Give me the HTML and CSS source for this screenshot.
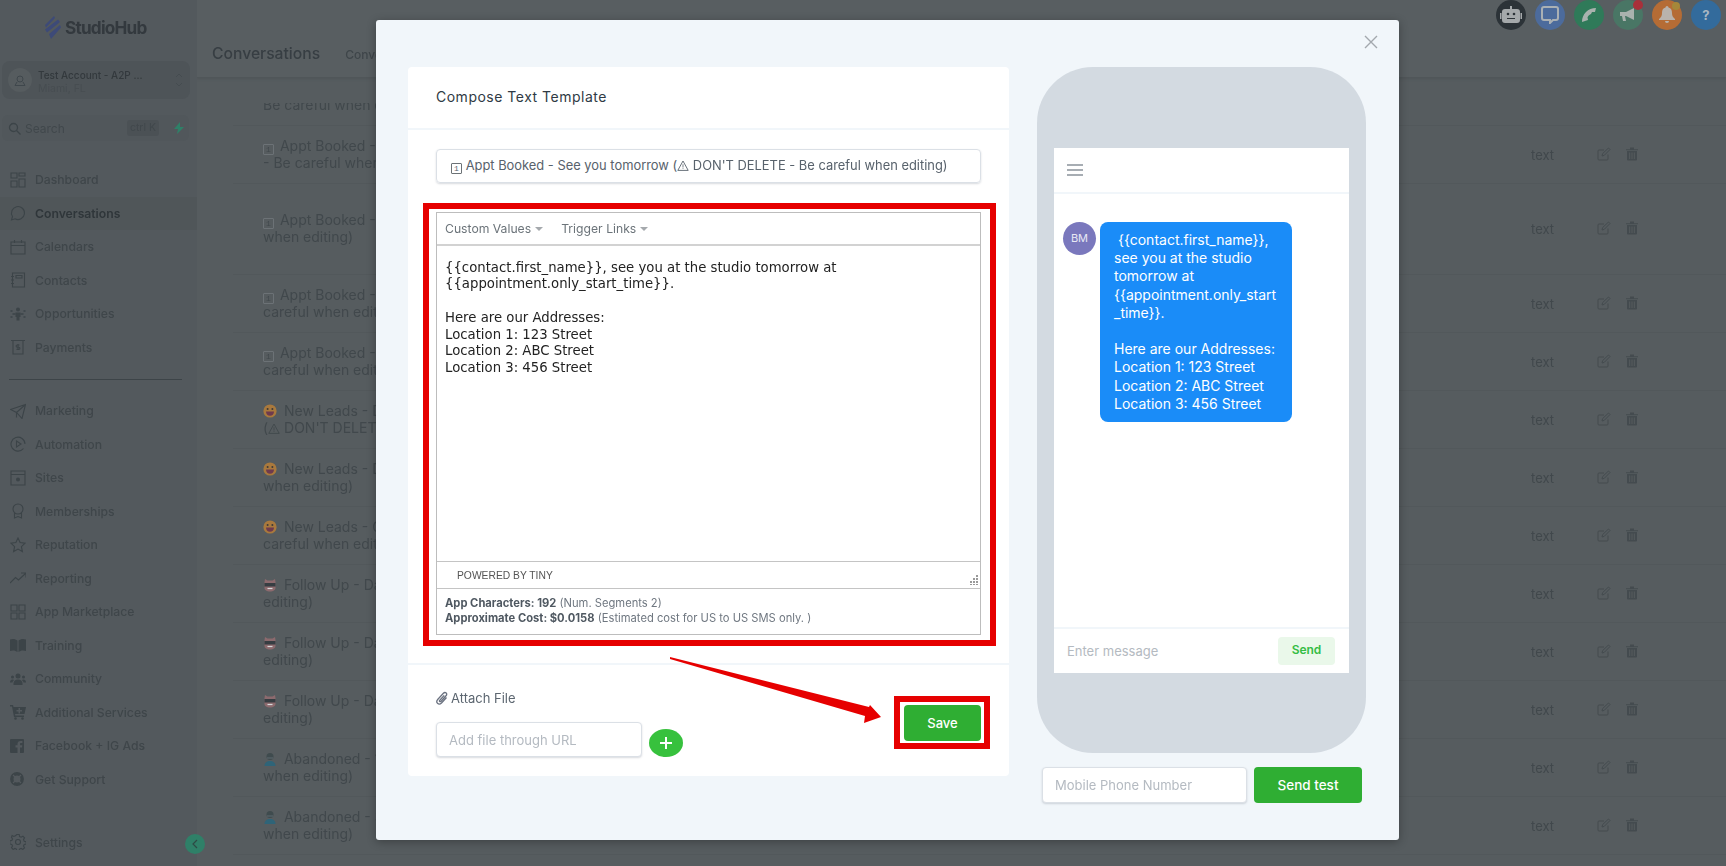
FILE: index.html
```html
<!DOCTYPE html>
<html lang="en">
<head>
    <meta charset="UTF-8">
    <meta name="viewport" content="width=device-width, initial-scale=1.0">
    <title>Compose Text Template</title>
    <link rel="stylesheet" href="styles.css">
</head>
<body>
    <svg class="defs" width="0" height="0" aria-hidden="true">
        <symbol id="grin" viewBox="0 0 14 14">
            <circle cx="7" cy="7" r="6.600" fill="#a9793d"/>
            <circle cx="4.600" cy="5" r="1" fill="#3d3a38"/>
            <circle cx="9.400" cy="5" r="1" fill="#3d3a38"/>
            <path d="M3 7.400h8c0 2.800-1.800 4.400-4 4.400S3 10.200 3 7.400z" fill="#6e3a4e"/>
        </symbol>
        <symbol id="shades" viewBox="0 0 14 14">
            <path d="M1.500 4L2 1l2.500 1.500h5L12 1l.5 3v6c0 2-2.500 3.500-5.500 3.500S1.500 12 1.500 10z" fill="#8c6a6e"/>
            <path d="M1.500 5h11v3.500h-11z" fill="#363d42"/>
            <path d="M4.500 10.500h5" stroke="#d7d9da" stroke-width="1.200"/>
        </symbol>
        <symbol id="person" viewBox="0 0 14 14">
            <circle cx="7" cy="4.500" r="3.500" fill="#3f4b4e"/>
            <path d="M1.500 14c0-3.500 2.500-5 5.500-5s5.500 1.500 5.500 5z" fill="#2f6478"/>
            <path d="M4 5.500h6v1H4z" fill="#5f6b70"/>
        </symbol>
        <symbol id="warn" viewBox="0 0 12 11">
            <path d="M6 1L.8 10.400h10.400z" fill="none" stroke="currentColor" stroke-width=".9"/>
            <path d="M5.600 4.200h.8v3.400h-.8zM5.600 8.200h.8v.9h-.8z" fill="currentColor"/>
        </symbol>
        <symbol id="edit" viewBox="0 0 14 14">
            <path d="M11 7.500V12a1 1 0 0 1-1 1H2a1 1 0 0 1-1-1V4a1 1 0 0 1 1-1h5" fill="none" stroke="currentColor"/>
            <path d="M5 9l.6-2.400L11.500 1l1.500 1.500-5.700 5.800z" fill="none" stroke="currentColor"/>
        </symbol>
        <symbol id="trash" viewBox="0 0 12 14">
            <path d="M0 2.200h12v1H0zM4 .5h4v1.700H4zM1 4h10v8.500a1 1 0 0 1-1 1H2a1 1 0 0 1-1-1zM3.200 5.500v6.500h1V5.500zM5.500 5.500v6.500h1V5.500zM7.800 5.500v6.500h1V5.500z" fill="currentColor" fill-rule="evenodd"/>
        </symbol>
    </svg>

    <div class="page">
        <aside class="sidebar">
            <div class="logo">
                <svg width="16" height="23" viewBox="0 0 16 23"><path d="M0 9L9 0l1 2-9 9.500zM0 13.500L13 3.500l2 2.500L2 16.500zM4 18l11-9 1 2.500L6 23z" fill="#3d4a78"/></svg>
                <span>StudioHub</span>
            </div>
            <div class="account">
                <div class="account-pic">
                    <svg width="12" height="13" viewBox="0 0 12 13" fill="none" stroke="#3f474c"><circle cx="6" cy="5" r="3"/><path d="M3 8L1 11.500h10L9 8"/></svg>
                </div>
                <div class="account-text">
                    <div class="account-name">Test Account - A2P ...</div>
                    <div class="account-city">Miami, FL</div>
                </div>
                <svg width="8" height="16" viewBox="0 0 8 16" fill="none" stroke="#454c50"><path d="M1 5l3-3 3 3M1 11l3 3 3-3"/></svg>
            </div>
            <div class="search">
                <svg width="13" height="13" viewBox="0 0 13 13" fill="none" stroke="#3c4448" stroke-width="1.300"><circle cx="5.500" cy="5.500" r="4"/><path d="M8.500 8.500l4 4"/></svg>
                <span class="search-label">Search</span>
                <span class="search-key">ctrl K</span>
                <svg width="10" height="12" viewBox="0 0 10 12"><path d="M6 0L0 7h4l-1 5 7-7H6z" fill="#2f8068"/></svg>
            </div>
            <nav class="nav">
                <a class="nav-item"><svg viewBox="0 0 16 16"><path d="M1 1h6v5H1zM9 1h6v3H9zM9 7h6v8H9zM1 9h6v6H1z"/></svg>Dashboard</a>
                <a class="nav-item active"><svg viewBox="0 0 16 16"><path d="M1.500 15l1-3.500A6.500 6.500 0 1 1 5 13.800z"/></svg>Conversations</a>
                <a class="nav-item"><svg viewBox="0 0 16 16"><path d="M1 3h14v12H1zM1 6.500h14M4.500 1v3M11.500 1v3"/></svg>Calendars</a>
                <a class="nav-item"><svg viewBox="0 0 16 16"><path d="M2.500 1h12v14h-12zM1 4.500h3M1 8h3M1 11.500h3M6 3.500h6v2.500H6z"/></svg>Contacts</a>
                <a class="nav-item"><svg viewBox="0 0 16 16"><circle cx="8" cy="3.500" r="2" class="fill"/><path class="fill" d="M5.500 6.500h5V11H9.500v3.500h-3V11H5.500z"/><path d="M0.500 5h2M0.500 11h2M13.500 5h2M13.500 11h2M2.500 8h3M10.500 8h3" stroke-width="1.500"/></svg>Opportunities</a>
                <a class="nav-item"><svg viewBox="0 0 16 16"><path d="M1 1.500h14M3 1.500V15h10V1.500M8 5v6M9.500 6H7.200a1 1 0 0 0 0 2.200h1.600a1 1 0 0 1 0 2.200H6.500"/></svg>Payments</a>
                <div class="nav-divider"></div>
                <a class="nav-item"><svg viewBox="0 0 16 16"><path d="M0.500 6.500L15.500 1.500 12 15.500 6.500 9.500zM6.500 9.500L15.500 1.500M6.500 9.500V14.500"/></svg>Marketing</a>
                <a class="nav-item"><svg viewBox="0 0 16 16"><path d="M13.500 12.500A7 7 0 1 1 15 8M6.500 5l4.500 3-4.500 3z"/></svg>Automation</a>
                <a class="nav-item"><svg viewBox="0 0 16 16"><path d="M1 1h14v14H1zM1 4.500h14"/><circle cx="8" cy="9.500" r="2" class="fill"/></svg>Sites</a>
                <a class="nav-item"><svg viewBox="0 0 16 16"><circle cx="8" cy="6" r="5"/><path d="M4.500 10v5L8 13.500l3.500 1.500v-5"/></svg>Memberships</a>
                <a class="nav-item"><svg viewBox="0 0 16 16"><path d="M8 1l2.100 4.600 5 .6-3.700 3.400 1 5L8 12.100l-4.400 2.500 1-5L.9 6.200l5-.6z"/></svg>Reputation</a>
                <a class="nav-item"><svg viewBox="0 0 16 16"><path d="M0 13l5.500-5.500 3 2.500L15.500 3.500M11 3h5v4.500"/></svg>Reporting</a>
                <a class="nav-item"><svg viewBox="0 0 16 16"><path d="M1 1h6v6H1zM9 1h6v6H9zM1 9h6v6H1zM9 9h6v6H9z"/></svg>App Marketplace</a>
                <a class="nav-item"><svg viewBox="0 0 16 16"><path class="fill" d="M0 2.500c3-1 5.500-.5 7.500 1V15c-2-1.500-4.500-2-7.500-1zM16 2.500c-3-1-5.500-.5-7.500 1V15c2-1.500 4.500-2 7.500-1z"/></svg>Training</a>
                <a class="nav-item"><svg viewBox="0 0 16 16"><g class="fill"><circle cx="8" cy="5" r="2.500"/><circle cx="2.500" cy="6" r="1.500"/><circle cx="13.500" cy="6" r="1.500"/><path d="M3.500 14v-1.500C3.500 10 5.500 8.500 8 8.500s4.500 1.500 4.500 4V14zM0 11.500C0 9.500 1 8.500 2.500 8.500c.7 0 1.200.2 1.600.5-1 .8-1.500 1.800-1.600 2.500zM16 11.500c0-2-1-3-2.500-3-.7 0-1.200.2-1.600.5 1 .8 1.500 1.800 1.600 2.500z"/></g></svg>Community</a>
                <a class="nav-item"><svg viewBox="0 0 16 16"><path class="fill" d="M0 1h3l.5 2H16l-1.500 7H5l.3 1.500H14V13H4L2 2.500H0zM8.500 4v2H6.500v1.500h2v2H10v-2h2V6h-2V4z" fill-rule="evenodd"/><circle cx="5.500" cy="14.500" r="1.300" class="fill"/><circle cx="12.500" cy="14.500" r="1.300" class="fill"/></svg>Additional Services</a>
                <a class="nav-item"><svg viewBox="0 0 16 16"><path class="fill" d="M1 1h12a1 1 0 0 1 1 1v12a1 1 0 0 1-1 1h-3V9.500h2l.3-2.300H10V6c0-.7.300-1 1-1h1.400V3H10.500C8.500 3 7.500 4.200 7.500 6v1.200h-2v2.300h2V15H1a1 1 0 0 1-1-1V2a1 1 0 0 1 1-1z"/></svg>Facebook + IG Ads</a>
                <a class="nav-item"><svg viewBox="0 0 16 16"><circle cx="7" cy="8" r="5.200" class="ring"/><path class="cut" d="M3 4l2.500 2.500M11 4L8.500 6.500M3 12l2.500-2.500M11 12L8.500 9.500"/></svg>Get Support</a>
            </nav>
            <a class="nav-item settings"><svg viewBox="0 0 16 16"><circle cx="8" cy="8" r="2.500"/><path d="M6.800.5h2.400l.4 2 1.500.7 1.800-1 1.600 1.700-1 1.700.7 1.600 2 .5v2.400l-2 .4-.7 1.500 1 1.800-1.700 1.600-1.700-1-1.600.7-.5 2H6.800l-.4-2-1.500-.7-1.800 1-1.600-1.700 1-1.700-.7-1.600-2-.5V6.800l2-.4.700-1.500-1-1.800L2.100 1.500l1.700 1 1.600-.7z"/></svg>Settings</a>
            <button class="collapse"><svg width="6" height="10" viewBox="0 0 6 10" fill="none" stroke="#2e4a45" stroke-width="1.200"><path d="M5 1L1 5l4 4"/></svg></button>
        </aside>

        <main class="main">
            <header class="header">
                <div class="top-icons">
                    <span class="top-icon robot"><svg width="22" height="18" viewBox="0 0 22 18"><path d="M10 0h2v3h-2zM5 3h12a3 3 0 0 1 3 3v8a3 3 0 0 1-3 3H5a3 3 0 0 1-3-3V6a3 3 0 0 1 3-3zM0 7h1.500v6H0zM20.500 7H22v6h-1.500z" fill="#a5a9ab"/><circle cx="8" cy="8" r="1.300" fill="#2c3338"/><circle cx="14" cy="8" r="1.300" fill="#2c3338"/><path d="M7 12h8v1H7z" fill="#2c3338"/></svg></span>
                    <span class="top-icon chat"><svg width="18" height="18" viewBox="0 0 18 18" fill="none" stroke="#aab0b4" stroke-width="2"><path d="M3 1h12a2 2 0 0 1 2 2v9a2 2 0 0 1-2 2h-3l-3 3v-3H3a2 2 0 0 1-2-2V3a2 2 0 0 1 2-2z"/></svg></span>
                    <span class="top-icon phone"><svg width="16" height="16" viewBox="0 0 16 16"><path d="M1 15C1 7 7 1 15 1l-1 4-3 0-1 2c-2 1-3 2-3.500 3.500L7 13z" fill="#a9b2ae"/></svg></span>
                    <span class="top-icon mega"><svg width="18" height="16" viewBox="0 0 18 16"><path d="M1 5h6l8-4v12l-8-4H6l1 5H4L3 9H1z" fill="#a9b2ae"/></svg><i class="dot red"></i></span>
                    <span class="top-icon bell"><svg width="16" height="18" viewBox="0 0 16 18"><path d="M8 0a1.500 1.500 0 0 1 1.500 1.500C12 2 13 4 13 7c0 3 1 4.500 3 6v1H0v-1c2-1.500 3-3 3-6 0-3 1-5 3.500-5.500A1.500 1.500 0 0 1 8 0zM6 15h4a2 2 0 0 1-4 0z" fill="#b9b3ac"/></svg><i class="dot yellow"></i></span>
                    <span class="top-icon help">?</span>
                </div>
                <div class="title-row">
                    <h1>Conversations</h1>
                    <span class="tab">Conversations</span>
                </div>
            </header>

            <div class="list">
                <div class="rows">
                    <div class="row"><div class="row-name"><span class="key">1</span> Appt Booked - Reminder (<svg class="warn"><use href="#warn"/></svg> DON'T DELETE<br>Be careful when editing)</div><div class="row-type">text</div><div class="row-actions"><svg class="ic-edit"><use href="#edit"/></svg><svg class="ic-trash"><use href="#trash"/></svg></div></div>
                    <div class="row"><div class="row-name"><span class="key">1</span> Appt Booked - 1 Day Before (<svg class="warn"><use href="#warn"/></svg> DON'T DELETE<br>- Be careful when editing)</div><div class="row-type">text</div><div class="row-actions"><svg class="ic-edit"><use href="#edit"/></svg><svg class="ic-trash"><use href="#trash"/></svg></div></div>
                    <div class="row tall"><div class="row-name"><span class="key">1</span> Appt Booked - Location (<svg class="warn"><use href="#warn"/></svg> DON'T DELETE - Be careful<br>when editing)</div><div class="row-type">text</div><div class="row-actions"><svg class="ic-edit"><use href="#edit"/></svg><svg class="ic-trash"><use href="#trash"/></svg></div></div>
                    <div class="row"><div class="row-name"><span class="key">1</span> Appt Booked - No Show (<svg class="warn"><use href="#warn"/></svg> DON'T DELETE - Be<br>careful when editing)</div><div class="row-type">text</div><div class="row-actions"><svg class="ic-edit"><use href="#edit"/></svg><svg class="ic-trash"><use href="#trash"/></svg></div></div>
                    <div class="row"><div class="row-name"><span class="key">1</span> Appt Booked - See you tomorrow (<svg class="warn"><use href="#warn"/></svg> DON'T DELETE - Be<br>careful when editing)</div><div class="row-type">text</div><div class="row-actions"><svg class="ic-edit"><use href="#edit"/></svg><svg class="ic-trash"><use href="#trash"/></svg></div></div>
                    <div class="row"><div class="row-name"><svg class="emoji"><use href="#grin"/></svg> New Leads - Day 1<br>(<svg class="warn"><use href="#warn"/></svg> DON'T DELETE - Be careful when editing)</div><div class="row-type">text</div><div class="row-actions"><svg class="ic-edit"><use href="#edit"/></svg><svg class="ic-trash"><use href="#trash"/></svg></div></div>
                    <div class="row"><div class="row-name"><svg class="emoji"><use href="#grin"/></svg> New Leads - Day 2 (<svg class="warn"><use href="#warn"/></svg> DON'T DELETE - Be careful<br>when editing)</div><div class="row-type">text</div><div class="row-actions"><svg class="ic-edit"><use href="#edit"/></svg><svg class="ic-trash"><use href="#trash"/></svg></div></div>
                    <div class="row"><div class="row-name"><svg class="emoji"><use href="#grin"/></svg> New Leads - Greeting (<svg class="warn"><use href="#warn"/></svg> DON'T DELETE - Be<br>careful when editing)</div><div class="row-type">text</div><div class="row-actions"><svg class="ic-edit"><use href="#edit"/></svg><svg class="ic-trash"><use href="#trash"/></svg></div></div>
                    <div class="row"><div class="row-name"><svg class="emoji"><use href="#shades"/></svg> Follow Up - Day 1 (<svg class="warn"><use href="#warn"/></svg> DON'T DELETE - Be careful when<br>editing)</div><div class="row-type">text</div><div class="row-actions"><svg class="ic-edit"><use href="#edit"/></svg><svg class="ic-trash"><use href="#trash"/></svg></div></div>
                    <div class="row"><div class="row-name"><svg class="emoji"><use href="#shades"/></svg> Follow Up - Day 2 (<svg class="warn"><use href="#warn"/></svg> DON'T DELETE - Be careful when<br>editing)</div><div class="row-type">text</div><div class="row-actions"><svg class="ic-edit"><use href="#edit"/></svg><svg class="ic-trash"><use href="#trash"/></svg></div></div>
                    <div class="row"><div class="row-name"><svg class="emoji"><use href="#shades"/></svg> Follow Up - Day 3 (<svg class="warn"><use href="#warn"/></svg> DON'T DELETE - Be careful when<br>editing)</div><div class="row-type">text</div><div class="row-actions"><svg class="ic-edit"><use href="#edit"/></svg><svg class="ic-trash"><use href="#trash"/></svg></div></div>
                    <div class="row"><div class="row-name"><svg class="emoji"><use href="#person"/></svg> Abandoned - 1 Day (<svg class="warn"><use href="#warn"/></svg> DON'T DELETE - Be careful<br>when editing)</div><div class="row-type">text</div><div class="row-actions"><svg class="ic-edit"><use href="#edit"/></svg><svg class="ic-trash"><use href="#trash"/></svg></div></div>
                    <div class="row"><div class="row-name"><svg class="emoji"><use href="#person"/></svg> Abandoned - 3 Days (<svg class="warn"><use href="#warn"/></svg> DON'T DELETE - Be careful<br>when editing)</div><div class="row-type">text</div><div class="row-actions"><svg class="ic-edit"><use href="#edit"/></svg><svg class="ic-trash"><use href="#trash"/></svg></div></div>
                </div>
            </div>
        </main>
    </div>

    <div class="modal">
        <button class="modal-close"><svg width="14" height="14" viewBox="0 0 14 14" stroke="#a3a8ad" stroke-width="1.400"><path d="M1 1l12 12M13 1L1 13"/></svg></button>

        <section class="compose">
            <div class="compose-head">Compose Text Template</div>
            <div class="compose-body">
                <div class="template-select"><span class="key">1</span> Appt Booked - See you tomorrow (<svg class="warn"><use href="#warn"/></svg> DON'T DELETE - Be careful when editing)</div>
                <div class="editor">
                    <div class="editor-tools">
                        <span class="tool">Custom Values<i class="caret"></i></span>
                        <span class="tool">Trigger Links<i class="caret"></i></span>
                    </div>
                    <div class="editor-text">
                        <p>{{contact.first_name}}, see you at the studio tomorrow at<br>{{appointment.only_start_time}}.</p>
                        <p><br></p>
                        <p>Here are our Addresses:<br>Location 1: 123 Street<br>Location 2: ABC Street<br>Location 3: 456 Street</p>
                    </div>
                    <div class="editor-status">
                        <span>POWERED BY TINY</span>
                        <svg width="9" height="10" viewBox="0 0 9 10" fill="#9a9a9a"><path d="M7 0h2v2H7zM7 3h2v2H7zM4 3h2v2H4zM7 6h2v2H7zM4 6h2v2H4zM1 6h2v2H1zM7 9h2v1H7zM4 9h2v1H4zM1 9h2v1H1z"/></svg>
                    </div>
                    <div class="editor-info">
                        <div><b>App Characters: 192</b> (Num. Segments 2)</div>
                        <div><b>Approximate Cost: $0.0158</b> (Estimated cost for US to US SMS only. )</div>
                    </div>
                    <div class="highlight"></div>
                </div>
            </div>
            <div class="compose-foot">
                <div class="attach">
                    <div class="attach-label">
                        <svg width="12" height="14" viewBox="0 0 12 14" fill="none" stroke="#6b7280" stroke-width="1.300"><path d="M10.500 6.500l-5 5.500c-1.300 1.300-3 1.300-4 .3s-.8-2.700.4-4l5.500-6c.8-.9 2-1 2.800-.3s.6 1.900-.2 2.800l-5 5.500c-.4.500-1 .5-1.300.2s-.3-.9.100-1.300l4.400-4.800"/></svg>
                        Attach File
                    </div>
                    <div class="attach-row">
                        <input class="field attach-input" placeholder="Add file through URL">
                        <button class="add-btn"><svg width="14" height="14" viewBox="0 0 14 14" stroke="#fff" stroke-width="2"><path d="M7 1v12M1 7h12"/></svg></button>
                    </div>
                </div>
                <div class="save-wrap">
                    <button class="btn-green save">Save</button>
                    <div class="highlight"></div>
                </div>
            </div>
        </section>

        <section class="preview">
            <div class="phone">
                <div class="screen">
                    <div class="screen-head"><span class="burger"></span></div>
                    <div class="screen-body">
                        <div class="avatar">BM</div>
                        <div class="bubble"> {{contact.first_name}}, see you at the studio tomorrow at {{appointment.only_start_time}}.

Here are our Addresses:
Location 1: 123 Street
Location 2: ABC Street
Location 3: 456 Street</div>
                    </div>
                    <div class="screen-foot">
                        <span class="msg-hint">Enter message</span>
                        <span class="msg-send">Send</span>
                    </div>
                </div>
            </div>
            <div class="test-row">
                <input class="field test-input" placeholder="Mobile Phone Number">
                <button class="btn-green send-test">Send test</button>
            </div>
        </section>

        <svg class="arrow" width="212" height="68" viewBox="0 0 212 68">
            <path d="M0 0L199 50 200 48 211 60 194 66 195 59 0 2z" fill="#e60000"/>
        </svg>
    </div>
</body>
</html>
```

FILE: styles.css
```css
* {
    box-sizing: border-box;
}
body {
    margin: 0;
    width: 1726px;
    height: 866px;
    overflow: hidden;
    position: relative;
    background-color: #565c5f;
    font-family: Inter, "Noto Sans", sans-serif;
    font-size: 14px;
}
.defs {
    position: absolute;
}
button {
    border: 0;
    padding: 0;
    font-family: inherit;
    cursor: pointer;
}

/* dimmed page behind the modal */
.page {
    display: flex;
    height: 866px;
    filter: blur(0.5px);
    color: #41484c;
}
.sidebar {
    width: 197px;
    flex-shrink: 0;
    display: flex;
    flex-direction: column;
    position: relative;
    background-color: #53595d;
    padding: 0 2px;
}
.logo {
    height: 61px;
    display: flex;
    align-items: center;
    gap: 4px;
    padding: 0 0 6px 43px;
    font-size: 17.200px;
    font-weight: 700;
    letter-spacing: -0.8px;
    color: #33393e;
}
.account {
    height: 38px;
    width: 188px;
    display: flex;
    align-items: center;
    padding: 0 7px 0 6px;
    background-color: #4e5458;
    border-radius: 8px;
}
.account-pic {
    width: 24px;
    height: 24px;
    border-radius: 50%;
    background-color: #565c5f;
    display: flex;
    align-items: center;
    justify-content: center;
}
.account-text {
    flex: 1;
    padding: 3px 0 0 6px;
}
.account-name {
    font-size: 10px;
    font-weight: 500;
    line-height: 14px;
    color: #33393d;
}
.account-city {
    font-size: 10.500px;
    line-height: 14px;
    color: #474d51;
}
.search {
    height: 26px;
    width: 187px;
    margin-top: 16px;
    display: flex;
    align-items: center;
    padding: 0 5px 0 6px;
    background-color: #51575b;
    border-radius: 6px;
}
.search-label {
    flex: 1;
    padding-left: 4px;
    font-size: 12px;
    color: #41484c;
}
.search-key {
    width: 32px;
    height: 16px;
    margin-right: 15px;
    background-color: #4b5155;
    border-radius: 3px;
    font-size: 10.500px;
    line-height: 16px;
    text-align: center;
}
.nav {
    margin: 22px -2px 0;
    display: flex;
    flex-direction: column;
}
.nav-item {
    height: 33.500px;
    display: flex;
    align-items: center;
    padding-left: 10px;
    gap: 9px;
    font-size: 12.200px;
    font-weight: 500;
    color: #3f464a;
}
.nav-item.active {
    background-color: #505659;
    color: #2f363a;
    font-weight: 600;
}
.nav-item svg {
    width: 16px;
    height: 16px;
    fill: none;
    stroke: #3c4448;
    stroke-width: 1.100;
    flex-shrink: 0;
}
.nav-item svg .fill {
    fill: #3c4448;
    stroke: none;
}
.nav-item svg .ring {
    fill: none;
    stroke-width: 3.400;
}
.nav-item svg .cut {
    stroke: #53595d;
    stroke-width: 1.200;
}
.nav-divider {
    width: 173px;
    margin: 15px 0 14px 9px;
    border-top: 1px solid #3d4448;
}
.settings {
    margin: auto -2px 7px;
}
.collapse {
    position: absolute;
    right: -8px;
    bottom: 12px;
    width: 20px;
    height: 20px;
    border-radius: 50%;
    background-color: #2f8068;
    display: flex;
    align-items: center;
    justify-content: center;
}
.main {
    flex: 1;
    display: flex;
    flex-direction: column;
    min-width: 0;
}
.header {
    height: 78px;
    flex-shrink: 0;
    border-bottom: 1px solid #505659;
    background-color: #585e61;
    box-shadow: 0 1px 2px #4f5558;
}
.top-icons {
    display: flex;
    justify-content: flex-end;
    gap: 9px;
    padding-right: 5px;
}
.top-icon {
    width: 30px;
    height: 30px;
    border-radius: 50%;
    position: relative;
    display: flex;
    align-items: center;
    justify-content: center;
}
.robot {
    background-color: #2c3338;
}
.chat {
    background-color: #4c6b9c;
}
.phone {
    background-color: #2f7a59;
}
.mega {
    background-color: #497665;
}
.bell {
    background-color: #b56c35;
}
.help {
    background-color: #336b9c;
    color: #a9b7c3;
    font-size: 13px;
    font-weight: 700;
}
.dot {
    position: absolute;
    border-radius: 50%;
}
.dot.red {
    width: 10px;
    height: 10px;
    right: 0;
    top: 0;
    background-color: #a8303a;
}
.dot.yellow {
    width: 8px;
    height: 8px;
    right: 2px;
    top: 2px;
    background-color: #a5873a;
}
.title-row {
    display: flex;
    align-items: center;
    gap: 25px;
    padding: 13px 0 0 15px;
}
.title-row h1 {
    margin: 0;
    font-size: 15.700px;
    line-height: 22px;
    font-weight: 500;
    color: #373e43;
}
.tab {
    font-size: 12px;
    font-weight: 500;
    color: #3f464a;
}

/* templates list, scrolled */
.list {
    flex: 1;
    margin: 25px 0 0 36px;
    overflow: hidden;
}
.rows {
    margin-top: -35px;
}
.row {
    height: 58px;
    display: flex;
    align-items: center;
    padding-left: 30px;
    border-bottom: 1px solid #52585b;
    color: #41484c;
}
.row.tall {
    height: 91px;
}
.row-name {
    width: 1268px;
    flex-shrink: 0;
    font-size: 14px;
    line-height: 16.500px;
    white-space: nowrap;
}
.row-name .key {
    margin-right: 2px;
}
.emoji {
    width: 14px;
    height: 14px;
    margin-right: 3px;
    vertical-align: -2px;
}
.warn {
    width: 12px;
    height: 11px;
    vertical-align: -1px;
}
.key {
    display: inline-block;
    width: 11px;
    height: 11px;
    border: 1px solid #6c7276;
    border-radius: 1px;
    font-family: "Liberation Mono", monospace;
    font-size: 8px;
    line-height: 9px;
    text-align: center;
    vertical-align: -1px;
}
.row-type {
    width: 66px;
    font-size: 13px;
}
.row-actions {
    display: flex;
    gap: 15px;
    margin-top: -2px;
    color: #444b4f;
}
.ic-edit {
    width: 14px;
    height: 14px;
}
.ic-trash {
    width: 12px;
    height: 14px;
}

/* modal */
.modal {
    position: absolute;
    left: 376px;
    top: 20px;
    width: 1023px;
    height: 820px;
    display: flex;
    padding: 47px 0 0 32px;
    background-color: #f1f6fa;
    border-radius: 3px;
    box-shadow: 0 2px 10px rgba(0, 0, 0, 0.3);
}
.modal-close {
    position: absolute;
    right: 21px;
    top: 15px;
    width: 14px;
    height: 14px;
    background: none;
}
.compose {
    width: 601px;
    height: 709px;
    display: flex;
    flex-direction: column;
    background-color: #fff;
    border-radius: 4px;
}
.compose-head {
    height: 63px;
    padding-left: 28px;
    border-bottom: 2px solid #f1f6fa;
    font-size: 14px;
    letter-spacing: 0.500px;
    line-height: 60px;
    color: #2f3a44;
}
.compose-body {
    padding: 19px 28px 28px 28px;
}
.template-select {
    height: 34px;
    padding-left: 14px;
    border: 1px solid #dbe0e6;
    border-radius: 4px;
    box-shadow: 0 1px 2px rgba(60, 70, 90, 0.2);
    margin-bottom: 29px;
    font-size: 12.900px;
    line-height: 32px;
    color: #58626c;
    white-space: nowrap;
}
.editor {
    position: relative;
    height: 423px;
    display: flex;
    flex-direction: column;
    border: 1px solid #bdbdbd;
}
.highlight {
    position: absolute;
    border: 6px solid #e60000;
}
.editor .highlight {
    inset: -10px -16px -12px -14px;
}
.editor-tools {
    height: 33px;
    flex-shrink: 0;
    display: flex;
    gap: 18px;
    align-items: center;
    padding-left: 8px;
    border-bottom: 2px solid #d2d2d2;
}
.tool {
    font-size: 12.200px;
    color: #6c747a;
}
.caret {
    display: inline-block;
    margin-left: 4px;
    border: 4px solid transparent;
    border-top-color: #a5a9ad;
    border-bottom: 0;
    vertical-align: 2px;
}
.editor-text {
    flex: 1;
    padding: 13.500px 8px 0;
    font-family: "DejaVu Sans", Verdana, sans-serif;
    font-size: 13.250px;
    line-height: 16.800px;
    color: #222;
}
.editor-text p {
    margin: 0;
}
.editor-status {
    height: 28px;
    flex-shrink: 0;
    display: flex;
    align-items: center;
    justify-content: space-between;
    padding: 0 2px 0 20px;
    border-top: 1px solid #c4c4c4;
    border-bottom: 1px solid #c4c4c4;
    font-family: "Liberation Sans", sans-serif;
    font-size: 10.300px;
    color: #555;
}
.editor-status svg {
    align-self: flex-end;
    margin-bottom: 3px;
}
.editor-info {
    height: 45px;
    flex-shrink: 0;
    padding: 7px 8px 0;
    font-size: 11.200px;
    line-height: 15px;
    color: #6f7780;
}
.editor-info b {
    color: #4f5861;
    font-weight: 700;
}
.compose-foot {
    flex: 1;
    display: flex;
    justify-content: space-between;
    padding: 23px 28px 0;
    border-top: 2px solid #f1f6fa;
}
.attach-label {
    height: 20px;
    display: flex;
    align-items: center;
    gap: 3px;
    font-size: 13px;
    color: #5c6670;
}
.attach-row {
    margin-top: 14px;
    display: flex;
    align-items: flex-start;
    gap: 7px;
}
.field {
    height: 35px;
    padding: 0 12px;
    border: 1px solid #dbe0e6;
    border-radius: 4px;
    box-shadow: 0 1px 2px rgba(60, 70, 90, 0.2);
    font-family: inherit;
    font-size: 13px;
    outline: none;
}
.field::placeholder {
    color: #b4bac1;
}
.attach-input {
    width: 206px;
}
.add-btn {
    width: 34px;
    height: 28px;
    margin-top: 7px;
    border-radius: 50%;
    background-color: #37c13d;
    display: flex;
    align-items: center;
    justify-content: center;
}
.save-wrap {
    position: relative;
    width: 77px;
    height: 36px;
    margin-top: 17px;
}
.save-wrap .highlight {
    inset: -9px -9px -8px -10px;
}
.btn-green {
    background-color: #2fae33;
    border-radius: 4px;
    color: #fff;
    font-weight: 500;
}
.save {
    width: 77px;
    height: 36px;
    font-size: 13px;
}

/* phone preview */
.preview {
    width: 329px;
    margin-left: 28px;
    display: flex;
    flex-direction: column;
}
.preview .phone {
    height: 686px;
    padding: 81px 17px 80px;
    background-color: #d3dae1;
    border-radius: 56px;
}
.screen {
    height: 525px;
    display: flex;
    flex-direction: column;
    background-color: #fff;
}
.screen-head {
    height: 46px;
    flex-shrink: 0;
    display: flex;
    align-items: center;
    padding: 0 13px;
    border-bottom: 2px solid #f1f6fa;
}
.burger {
    width: 16px;
    height: 12px;
    border-top: 2px solid #a7adb3;
    border-bottom: 2px solid #a7adb3;
    position: relative;
}
.burger::after {
    content: "";
    position: absolute;
    left: 0;
    right: 0;
    top: 3px;
    height: 2px;
    background-color: #a7adb3;
}
.screen-body {
    flex: 1;
    display: flex;
    align-items: flex-start;
    gap: 4px;
    padding: 28px 0 0 9px;
}
.avatar {
    width: 33px;
    height: 33px;
    flex-shrink: 0;
    border-radius: 50%;
    background-color: #7a78bd;
    color: #e8e8f4;
    font-size: 11px;
    line-height: 33px;
    text-align: center;
}
.bubble {
    width: 192px;
    padding: 9px 14px;
    background-color: #1a8cf8;
    border-radius: 8px;
    color: #fff;
    font-size: 14px;
    line-height: 18.200px;
    white-space: pre-wrap;
    overflow-wrap: break-word;
}
.screen-foot {
    height: 46px;
    flex-shrink: 0;
    display: flex;
    align-items: center;
    justify-content: space-between;
    padding: 0 14px 0 13px;
    border-top: 2px solid #f1f6fa;
}
.msg-hint {
    font-size: 13px;
    color: #b4bac1;
}
.msg-send {
    width: 57px;
    height: 28px;
    background-color: #eaf8ea;
    border-radius: 4px;
    color: #35bd44;
    font-size: 12px;
    font-weight: 600;
    line-height: 26px;
    text-align: center;
}
.test-row {
    display: flex;
    gap: 7px;
    margin: 14px 4px 0 5px;
}
.test-input {
    width: 205px;
    height: 36px;
}
.send-test {
    width: 108px;
    height: 36px;
    font-size: 13.500px;
}
.arrow {
    position: absolute;
    left: 294px;
    top: 637px;
}
```
